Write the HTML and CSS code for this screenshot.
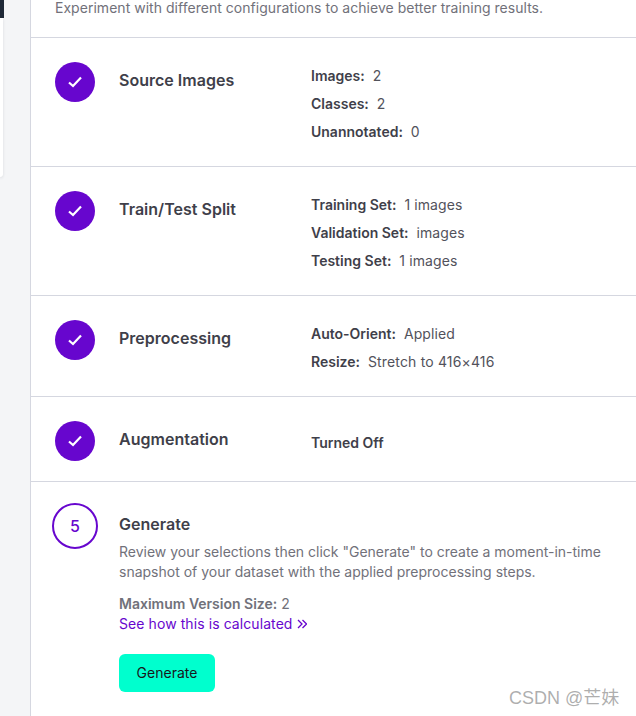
FILE: index.html
```html
<!DOCTYPE html>
<html lang="en">
<head>
<meta charset="utf-8">
<title>Generate Version</title>
<link rel="stylesheet" href="styles.css">
</head>
<body>
<aside class="rail">
  <div class="rail-dark"></div>
  <div class="rail-card"></div>
</aside>
<main class="main">
  <p class="intro">Experiment with different configurations to achieve better training results.</p>
  <section class="step step-tall">
    <div class="badge"><svg class="check" viewBox="0 0 16 16"><path d="M2 8.500 6 12 14 3.500"/></svg></div>
    <h2 class="title">Source Images</h2>
    <div class="details">
      <div class="line"><b>Images:</b> <span class="val">2</span></div>
      <div class="line"><b>Classes:</b> <span class="val">2</span></div>
      <div class="line"><b>Unannotated:</b> <span class="val">0</span></div>
    </div>
  </section>
  <section class="step step-tall">
    <div class="badge"><svg class="check" viewBox="0 0 16 16"><path d="M2 8.500 6 12 14 3.500"/></svg></div>
    <h2 class="title">Train/Test Split</h2>
    <div class="details">
      <div class="line"><b>Training Set:</b> <span class="val">1 images</span></div>
      <div class="line"><b>Validation Set:</b> <span class="val">images</span></div>
      <div class="line"><b>Testing Set:</b> <span class="val">1 images</span></div>
    </div>
  </section>
  <section class="step step-tall">
    <div class="badge"><svg class="check" viewBox="0 0 16 16"><path d="M2 8.500 6 12 14 3.500"/></svg></div>
    <h2 class="title">Preprocessing</h2>
    <div class="details">
      <div class="line"><b>Auto-Orient:</b> <span class="val">Applied</span></div>
      <div class="line"><b>Resize:</b> <span class="val val-wide">Stretch to 416×416</span></div>
    </div>
  </section>
  <section class="step step-short">
    <div class="badge"><svg class="check" viewBox="0 0 16 16"><path d="M2 8.500 6 12 14 3.500"/></svg></div>
    <h2 class="title">Augmentation</h2>
    <div class="details details-offset">
      <div class="line"><b>Turned Off</b></div>
    </div>
  </section>
  <section class="step step-current">
    <div class="badge-outline">5</div>
    <div class="current-body">
      <h2 class="title title-current">Generate</h2>
      <p class="desc">Review your selections then click "Generate" to create a moment-in-time snapshot of your dataset with the applied preprocessing steps.</p>
      <p class="size"><b>Maximum Version Size:</b> 2</p>
      <a class="calc" href="#">See how this is calculated <svg class="chev" viewBox="0 0 10 10"><path d="M1 1 5 5 1 9M5.500 1 9.500 5 5.500 9"/></svg></a>
      <button class="generate" type="button">Generate</button>
    </div>
  </section>
</main>
<div class="watermark">CSDN @芒妹</div>
</body>
</html>
```

FILE: styles.css
```css
* { box-sizing: border-box; }
html, body { margin: 0; height: 716px; overflow: hidden; }
body {
  display: flex;
  background: #f4f5f7;
  font-family: Inter, "Noto Sans CJK SC", sans-serif;
  color: #3f3f46;
  position: relative;
}
.rail { width: 30px; flex: none; }
.rail-dark { width: 4px; height: 18px; background: #1f2937; }
.rail-card {
  width: 3px;
  height: 159px;
  background: #fff;
  border-bottom-right-radius: 4px;
  box-shadow: 0 1px 3px rgba(30, 40, 60, .12);
}
.main {
  flex: 1;
  min-width: 0;
  background: #fff;
  border-left: 1px solid #d5d7e0;
}
.intro {
  margin: 0;
  height: 38px;
  padding: 1px 0 0 24px;
  font-size: 14px;
  line-height: 14px;
  letter-spacing: .03px;
  color: #71717a;
  border-bottom: 1px solid #d5d7e0;
}
.step {
  display: flex;
  align-items: flex-start;
  border-bottom: 1px solid #d5d7e0;
  padding: 24px 0 0 24px;
}
.step-tall { padding-bottom: 20px; }
.step-short { padding-bottom: 20px; }
.step-current { border-bottom: 0; padding: 21px 0 0 21px; }
.badge {
  width: 40px;
  height: 40px;
  flex: none;
  border-radius: 50%;
  background: #6706ce;
  display: flex;
  align-items: center;
  justify-content: center;
}
.check { width: 16px; height: 16px; fill: none; stroke: #fff; stroke-width: 2.2; }
.title {
  width: 192px;
  margin: 6px 0 0 24px;
  flex: none;
  font-size: 16px;
  line-height: 24px;
  font-weight: 600;
  letter-spacing: .015px;
  color: #3f3f4a;
}
.details { font-size: 14px; color: #52525b; }
.details-offset { margin-top: 8px; }
.line { height: 28px; line-height: 28px; white-space: nowrap; }
.line b { font-weight: 600; color: #3f3f4a; margin-right: 4px; }
.val { letter-spacing: .1px; }
.val-wide { letter-spacing: .16px; }
.badge-outline {
  width: 46px;
  height: 46px;
  flex: none;
  border: 2px solid #6706ce;
  border-radius: 50%;
  display: flex;
  align-items: center;
  justify-content: center;
  font-size: 16px;
  font-weight: 500;
  color: #6706ce;
}
.current-body { margin-left: 21px; min-width: 0; }
.title-current { margin: 9px 0 0; width: auto; }
.desc {
  margin: 6px 0 0;
  width: 500px;
  font-size: 14px;
  line-height: 20px;
  color: #71717a;
}
.size {
  margin: 12px 0 0;
  font-size: 14px;
  line-height: 20px;
  color: #71717a;
}
.size b { font-weight: 600; }
.calc {
  display: block;
  font-size: 14px;
  line-height: 20px;
  letter-spacing: .08px;
  color: #6706ce;
  text-decoration: none;
}
.chev { width: 10px; height: 10px; fill: none; stroke: currentColor; stroke-width: 1.3; }
.generate {
  display: block;
  margin-top: 20px;
  width: 96px;
  height: 38px;
  border: 0;
  border-radius: 6px;
  background: #00ffce;
  color: #18181b;
  font: 14px/20px Inter, sans-serif;
}
.watermark {
  position: absolute;
  left: 509px;
  top: 686px;
  font-size: 18px;
  line-height: 24px;
  font-family: "Liberation Sans", "Noto Sans CJK SC", sans-serif;
  color: rgba(120, 120, 120, .6);
  white-space: nowrap;
}
```
